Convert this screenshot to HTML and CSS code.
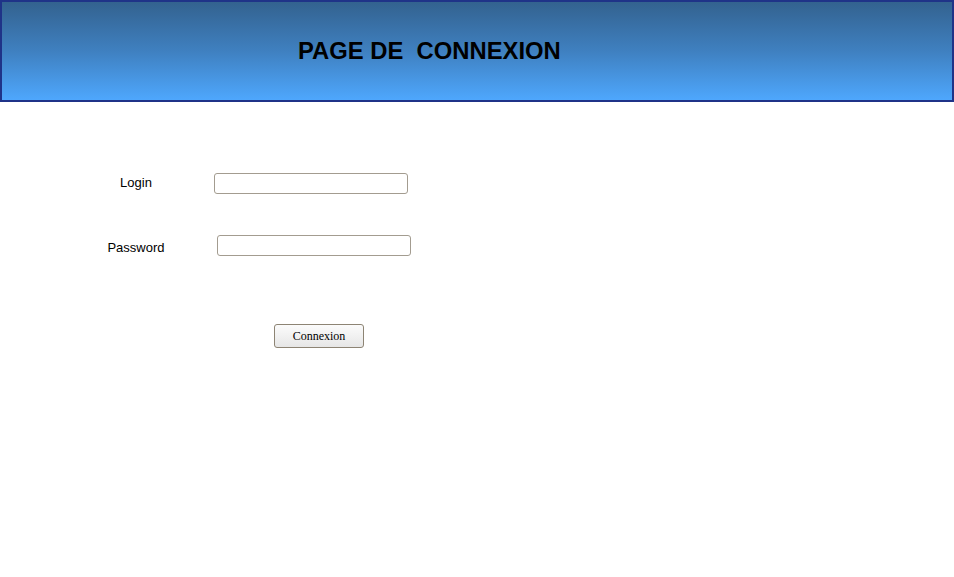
FILE: index.html
```html
<!DOCTYPE html>
<html lang="fr">
<head>
<meta charset="utf-8">
<title>Page de connexion</title>
<link rel="stylesheet" href="styles.css">
</head>
<body>
<header class="banner">
  <h1 class="banner-title">PAGE DE  CONNEXION</h1>
</header>
<form class="login-form">
  <div class="row row-login">
    <label class="label label-login" for="login">Login</label>
    <input class="field" id="login" type="text">
  </div>
  <div class="row row-password">
    <label class="label label-password" for="password">Password</label>
    <input class="field field-password" id="password" type="password">
  </div>
  <div class="actions">
    <button class="btn" type="button">Connexion</button>
  </div>
</form>
</body>
</html>
```

FILE: styles.css
```css
html, body {
  margin: 0;
  padding: 0;
  background: #ffffff;
}

body {
  font-family: "Liberation Sans", Arial, sans-serif;
  color: #000;
}

.banner {
  box-sizing: border-box;
  height: 102px;
  border: 2px solid #1f3388;
  background: linear-gradient(to bottom, #33628f 0%, #3f80c0 50%, #4ea7fd 100%);
  display: flex;
  align-items: center;
  padding-left: 296px;
}

.banner-title {
  margin: 0;
  font-size: 23.8px;
  font-weight: bold;
  line-height: normal;
  white-space: pre;
  color: #000;
}

.login-form {
  padding-top: 71px;
}

.row {
  display: flex;
  align-items: center;
  height: 21px;
}

.row-password {
  margin-top: 41px;
}

.label {
  width: 80px;
  margin-left: 96px;
  text-align: center;
  font-size: 13px;
}

.label-login {
  padding-bottom: 2px;
}

.label-password {
  padding-top: 4px;
}

.field {
  box-sizing: border-box;
  width: 194px;
  height: 21px;
  margin: 0 0 0 38px;
  padding: 1px 3px;
  border: 1px solid #a39c90;
  border-radius: 3px;
  background: #fff;
  font-size: 13px;
}

.field-password {
  margin-left: 41px;
}

.actions {
  margin-top: 68px;
  padding-left: 274px;
}

.btn {
  box-sizing: border-box;
  width: 90px;
  height: 24px;
  margin: 0;
  padding: 0;
  border: 1px solid #8d8474;
  border-radius: 3px;
  background: linear-gradient(to bottom, #fbfbfb 0%, #f1f1f1 50%, #e6e6e6 100%);
  font-family: "Liberation Serif", "Times New Roman", serif;
  font-size: 12px;
  color: #000;
}
```
